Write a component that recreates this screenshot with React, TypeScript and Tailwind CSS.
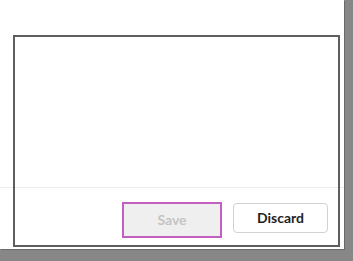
import React from "react";

export default function App() {
  return (
    <div
      className="w-[353px] h-[261px] bg-[#878787] overflow-hidden"
      style={{ fontFamily: "Lato, 'Noto Sans', sans-serif" }}
    >
      <div className="relative w-[344px] h-[249px] bg-white flex flex-col shadow-[1px_1px_0_#6a6a6a]">
        <div className="h-[187px]" />
        <div className="flex-1 border-t border-[#ececec] flex justify-end items-start pt-[15px] pr-[16px] gap-[11px]">
          <div className="w-[100px] h-[36px] border-2 border-[#c25fc0] bg-[#efefef] flex items-center justify-center -mt-[1px]">
            <span className="text-[14px] font-bold text-[#c4c4c4] leading-none">Save</span>
          </div>
          <button className="w-[95px] h-[30px] border border-[#d2d2d2] rounded-[4px] bg-white flex items-center justify-center">
            <span className="text-[14px] font-bold text-[#1f1f1f] leading-none">Discard</span>
          </button>
        </div>
        <div className="absolute left-[13px] top-[35px] w-[327px] h-[212px] border-2 border-[#5e5e5e] pointer-events-none" />
      </div>
    </div>
  );
}
